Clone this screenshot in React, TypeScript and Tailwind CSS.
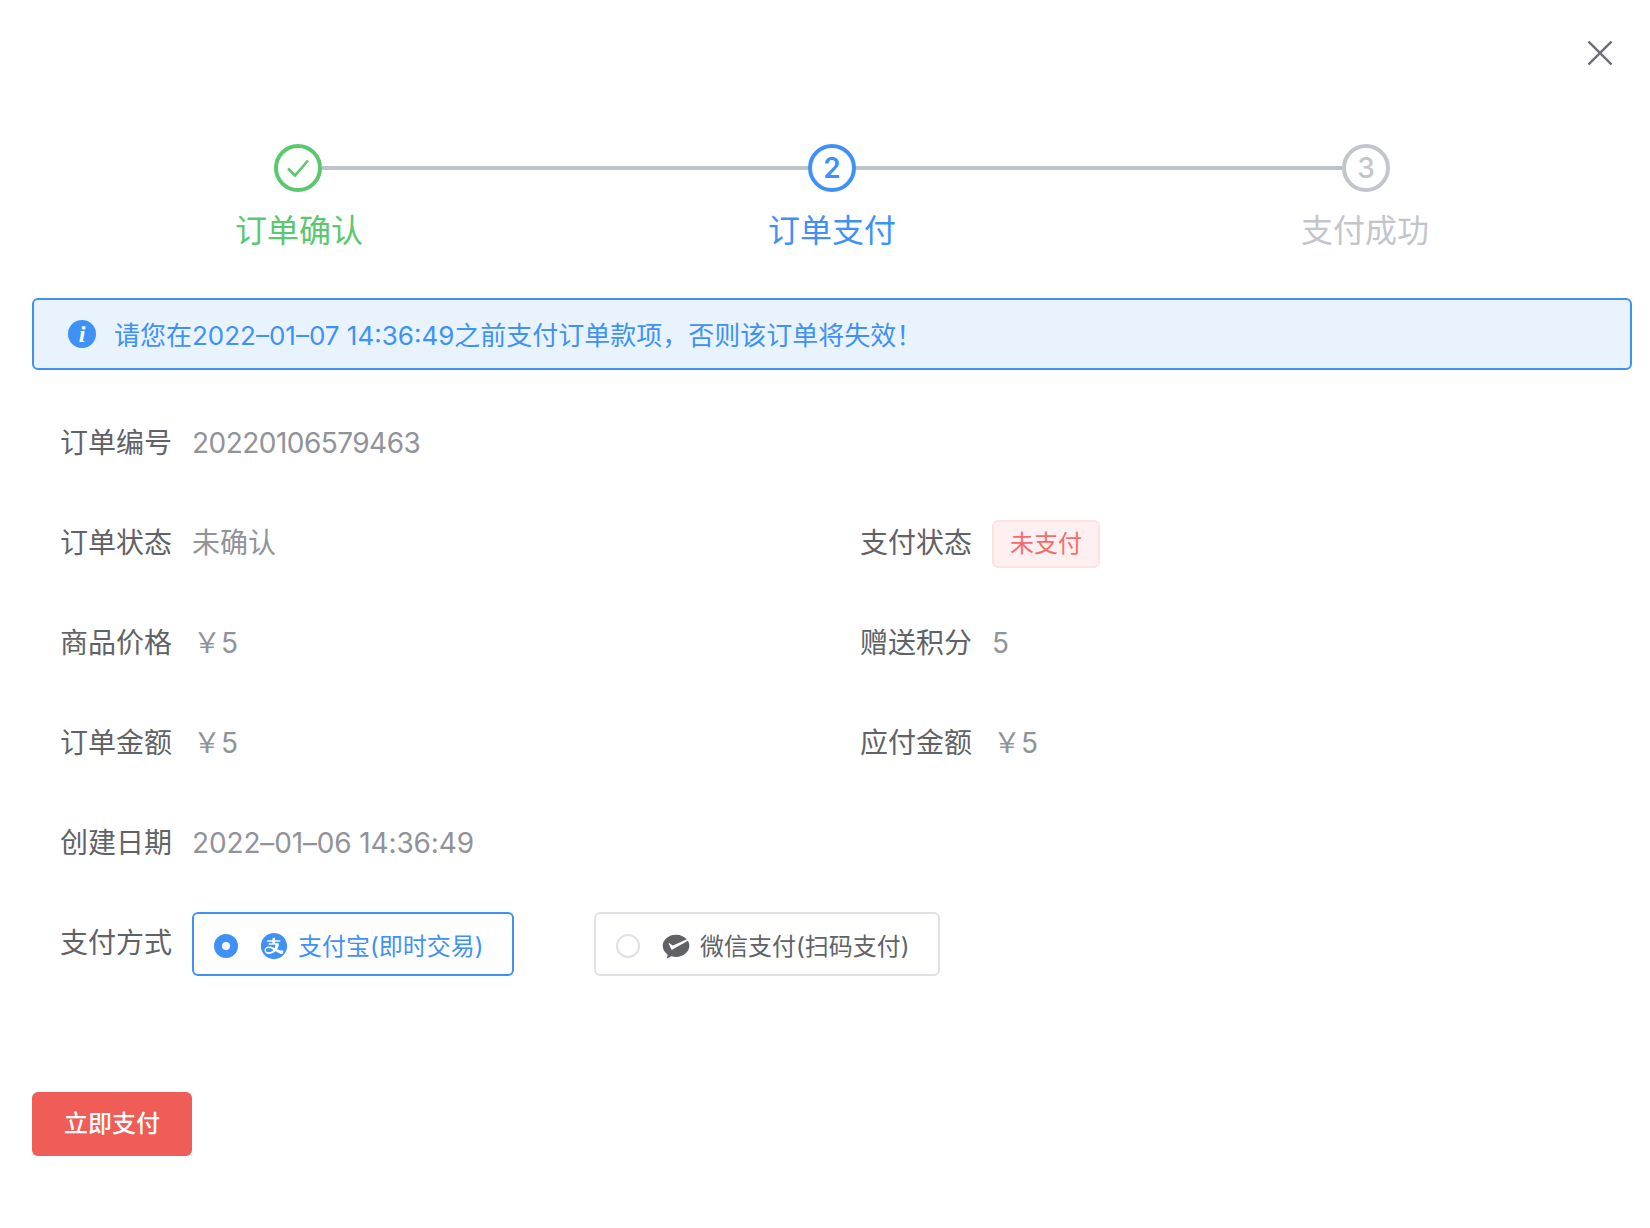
import { AiFillAlipayCircle } from "react-icons/ai";
import { RiWechatPayFill } from "react-icons/ri";

const font = "font-['Inter','Noto_Sans_CJK_SC',sans-serif]";

function Step({ label, state, n, lineL, lineR, labelClass }: { label: string; state: "done" | "active" | "todo"; n: number; lineL: boolean; lineR: boolean; labelClass: string }) {
  const ring = state === "done" ? "border-[#5ac86f] text-[#5ac86f]" : state === "active" ? "border-[#3f91f7] text-[#3f91f7]" : "border-[#c3c5cd] text-[#c3c5cd]";
  const text = state === "done" ? "text-[#5ac86f]" : state === "active" ? "text-[#3f91f7]" : "text-[#c3c5cd]";
  const weight = state === "active" ? "font-semibold" : "font-medium";
  return (
    <div className="flex flex-1 flex-col items-center">
      <div className="flex w-full items-center">
        <div className={lineL ? "h-1 flex-1 bg-[#c0c2cb]" : "flex-1"} />
        <div className={`flex h-12 w-12 items-center justify-center rounded-full border-4 bg-white text-[28px] ${weight} ${ring}`}>
          {state === "done" ? (
            <svg width="26" height="22" viewBox="0 0 26 22" fill="none" stroke="currentColor" strokeWidth="2.6">
              <path d="M3 11.5 L10 18.5 L23 3.5" />
            </svg>
          ) : (
            n
          )}
        </div>
        <div className={lineR ? "h-1 flex-1 bg-[#c0c2cb]" : "flex-1"} />
      </div>
      <div className={`mt-[17px] text-[32px] leading-[44px] ${text} ${labelClass}`}>{label}</div>
    </div>
  );
}

function Field({ label, children }: { label: string; children: React.ReactNode }) {
  return (
    <div className="flex h-[100px] items-center">
      <div className="w-[112px] text-[28px] text-[#606266]">{label}</div>
      <div className="ml-5 text-[28px] text-[#909399]">{children}</div>
    </div>
  );
}

export default function App() {
  return (
    <div className={`${font} h-[1228px] w-[1650px] bg-white pl-8 pr-[18px]`}>
      <div className="flex h-[144px] justify-end pr-5 pt-[41px]">
        <svg width="24" height="24" viewBox="0 0 24 24" fill="none" stroke="#6d6f75" strokeWidth="2.4">
          <path d="M0.5 0.5 L23.5 23.5 M23.5 0.5 L0.5 23.5" />
        </svg>
      </div>

      <div className="-mx-px flex">
        <Step label="订单确认" state="done" n={1} lineL={false} lineR labelClass="pl-[2px]" />
        <Step label="订单支付" state="active" n={2} lineL lineR labelClass="" />
        <Step label="支付成功" state="todo" n={3} lineL lineR={false} labelClass="pr-[2px]" />
      </div>

      <div className="mt-[45px] flex h-[72px] items-center gap-[18px] rounded-md border-2 border-[#3f91f7] bg-[#e8f3fe] pl-[34px] text-[26px] text-[#3f91f7]">
        <span className="flex h-7 w-7 items-center justify-center rounded-full bg-[#3f91f7] font-['Liberation_Serif',serif] text-[24px] font-bold italic leading-none text-white">i</span>
        <span className="mt-[2px]">请您在2022–01–07 14:36:49之前支付订单款项，否则该订单将失效！</span>
      </div>

      <div className="mt-[23px] grid grid-cols-[800px_1fr] pl-7">
        <Field label="订单编号"><span className="tracking-[-0.53px]">20220106579463</span></Field>
        <div />
        <Field label="订单状态">未确认</Field>
        <Field label="支付状态">
          <span className="mt-0.5 flex h-12 w-[108px] items-center justify-center rounded-md border-2 border-[#fde2e2] bg-[#fef0f0] text-2xl text-[#f56c6c]">未支付</span>
        </Field>
        <Field label="商品价格"><span className="pl-px">￥5</span></Field>
        <Field label="赠送积分">5</Field>
        <Field label="订单金额"><span className="pl-px">￥5</span></Field>
        <Field label="应付金额"><span className="pl-px">￥5</span></Field>
        <Field label="创建日期"><span className="tracking-[-0.14px]">2022–01–06 14:36:49</span></Field>
        <div />
      </div>

      <div className="mt-[19px] flex items-center pl-7">
        <div className="w-[112px] pb-[2px] text-[28px] text-[#606266]">支付方式</div>
        <div className="ml-5 flex h-16 w-[322px] items-center rounded-md border-2 border-[#3f91f7] pl-5 pt-1 text-2xl text-[#3f91f7]">
          <span className="flex h-6 w-6 items-center justify-center rounded-full bg-[#3f91f7]">
            <span className="h-2 w-2 rounded-full bg-white" />
          </span>
          <AiFillAlipayCircle className="ml-[21px] h-[30px] w-[30px]" />
          <span className="ml-[9px] mt-[2px]">支付宝(即时交易)</span>
        </div>
        <div className="ml-[80px] flex h-16 w-[346px] items-center rounded-md border-2 border-[#e0e0e6] pl-5 pt-1 text-2xl text-[#606266]">
          <span className="h-6 w-6 rounded-full border-2 border-[#e0e0e6]" />
          <RiWechatPayFill className="ml-5 h-8 w-8 text-[#606266]" />
          <span className="ml-2 mt-[2px]">微信支付(扫码支付)</span>
        </div>
      </div>

      <button className="mt-[116px] h-16 w-40 rounded-md bg-[#f05c56] text-2xl font-medium text-white">立即支付</button>
    </div>
  );
}
